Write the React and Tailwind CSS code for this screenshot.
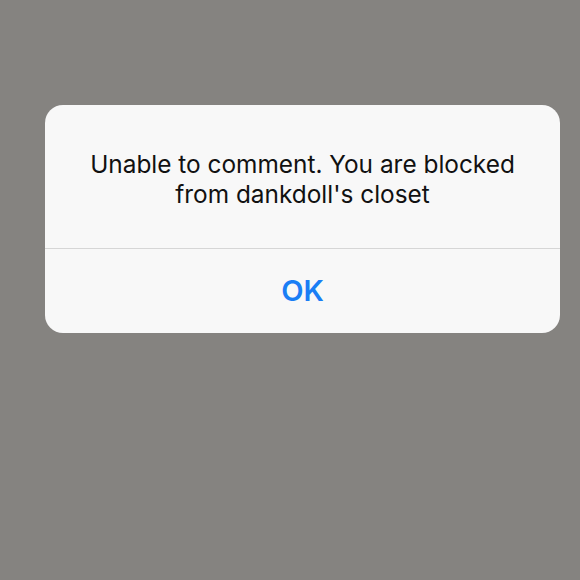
import React from 'react';

export default function App() {
  return (
    <div className="w-[580px] h-[580px] bg-[#858380] overflow-hidden" style={{ fontFamily: 'Inter, "Liberation Sans", Arial, sans-serif' }}>
      <div className="ml-[45px] mt-[105px] w-[515px] rounded-[18px] bg-[#f8f8f8] overflow-hidden">
        <div className="pt-[44px] pb-[39px] px-4 text-center text-[24.4px] leading-[30px] text-[#111111]">
          <p>Unable to comment. You are blocked</p>
          <p>from dankdoll's closet</p>
        </div>
        <div className="h-px bg-[#d6d6d6]" />
        <button className="w-full h-[84px] flex items-center justify-center text-[29px] font-semibold text-[#1a7ef5]">
          OK
        </button>
      </div>
    </div>
  );
}
